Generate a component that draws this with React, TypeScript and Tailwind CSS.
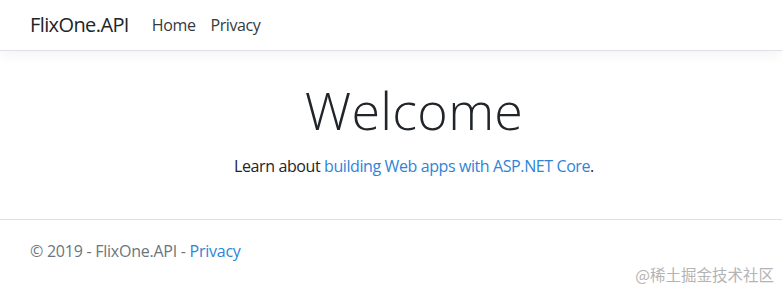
export default function App() {
  return (
    <div className="relative h-[292px] w-[782px] overflow-hidden bg-white font-['Open_Sans',sans-serif] text-[#212529]">
      {/* Navbar */}
      <header className="relative z-10 border-b border-[#dee2e6] bg-white shadow-[0_4px_12px_rgba(0,0,0,0.05)]">
        <nav className="flex h-[50px] items-center px-[30px]">
          <a className="mr-[23px] text-[20px] tracking-[-0.6px] text-[#212529]">FlixOne.API</a>
          <ul className="flex gap-[15px] text-[16px] tracking-[-0.4px] text-[#343a40]">
            <li>Home</li>
            <li>Privacy</li>
          </ul>
        </nav>
      </header>

      {/* Main */}
      <main className="flex h-[168px] flex-col items-center pt-[28px] pl-[46px]">
        <h1 className="text-[52px] leading-[1.2] font-light tracking-[0.3px]">Welcome</h1>
        <p className="mt-[13px] text-[16px] leading-[24px] tracking-[-0.4px]">
          Learn about <a className="text-[#2f84d6]">building Web apps with ASP.NET Core</a>.
        </p>
      </main>

      {/* Footer */}
      <footer className="border-t border-[#dee2e6] px-[30px] text-[16px] leading-[62px] tracking-[-0.25px] text-[#6c757d]">
        © 2019 - FlixOne.API - <a className="text-[#2f84d6]">Privacy</a>
      </footer>

      <div className="absolute right-[8px] bottom-[6px] font-['Noto_Sans_CJK_SC',sans-serif] text-[15.5px] text-[#b4b4b4]">
        @稀土掘金技术社区
      </div>
    </div>
  )
}
